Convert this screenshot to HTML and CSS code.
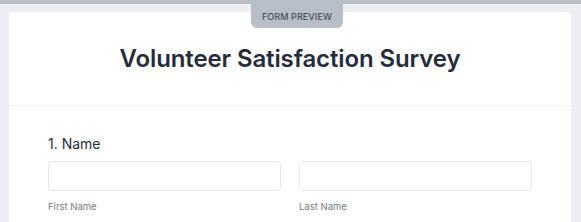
FILE: index.html
```html
<!DOCTYPE html>
<html lang="en">
<head>
    <meta charset="UTF-8">
    <meta name="viewport" content="width=device-width, initial-scale=1.0">
    <title>Form Preview</title>
    <link rel="stylesheet" href="styles.css">
</head>
<body>
    <div class="preview-frame">
        <div class="preview-badge">Form Preview</div>

        <div class="form-card">
            <div class="form-header">
                <h1>Volunteer Satisfaction Survey</h1>
            </div>

            <div class="form-body">
                <div class="question">
                    <label class="question-title">1. Name</label>
                    <div class="name-grid">
                        <div class="field">
                            <input type="text" id="firstName">
                            <span class="field-hint">First Name</span>
                        </div>
                        <div class="field">
                            <input type="text" id="lastName">
                            <span class="field-hint">Last Name</span>
                        </div>
                    </div>
                </div>
            </div>
        </div>
    </div>
</body>
</html>
```

FILE: styles.css
```css
:root {
    --frame: #b8bec7;
    --page: #eceef2;
    --text: #252c3b;
    --muted: #737a87;
    --line: #e5e7eb;
}

* {
    box-sizing: border-box;
}

body {
    margin: 0;
    background: var(--page);
    font-family: Inter, "Noto Sans", sans-serif;
    color: var(--text);
}

.preview-frame {
    position: relative;
    border-top: 4px solid var(--frame);
    padding: 8px 10px 0 9px;
    height: 222px;
    overflow: hidden;
}

.preview-badge {
    position: absolute;
    top: -4px;
    left: 251px;
    width: 92px;
    height: 28px;
    padding-top: 4px;
    background: var(--frame);
    border-radius: 0 0 6px 6px;
    color: #474f5c;
    font-size: 9px;
    font-weight: 500;
    text-transform: uppercase;
    letter-spacing: 0.01em;
    display: flex;
    align-items: center;
    justify-content: center;
    z-index: 2;
}

.form-card {
    background: white;
    border-radius: 4px 4px 0 0;
    min-height: 300px;
}

.form-header {
    height: 94px;
    display: flex;
    align-items: center;
    justify-content: center;
    border-bottom: 1px solid #f0f1f4;
}

.form-header h1 {
    margin: 0;
    font-size: 24px;
    line-height: 30px;
    font-weight: 600;
    letter-spacing: -0.005em;
}

.form-body {
    padding: 28px 39px 0;
}

.question-title {
    display: block;
    font-size: 14px;
    line-height: 20px;
    font-weight: 400;
}

.name-grid {
    display: grid;
    grid-template-columns: 1fr 1fr;
    gap: 18px;
    margin-top: 7px;
}

.field input {
    display: block;
    width: 100%;
    height: 30px;
    border: 1px solid var(--line);
    border-radius: 4px;
    background: white;
}

.field-hint {
    display: block;
    margin-top: 9px;
    font-size: 9.5px;
    line-height: 14px;
    color: var(--muted);
}
```
